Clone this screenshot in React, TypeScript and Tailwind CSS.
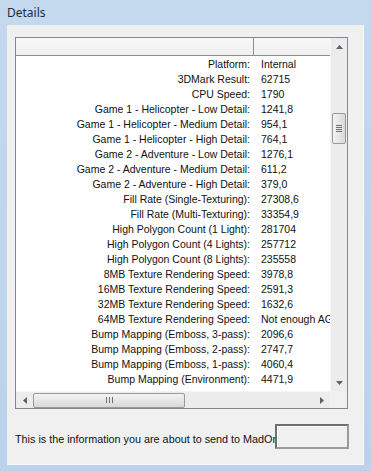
import React from 'react';

const rows: [string, string][] = [
  ['Platform:', 'Internal'],
  ['3DMark Result:', '62715'],
  ['CPU Speed:', '1790'],
  ['Game 1 - Helicopter - Low Detail:', '1241,8'],
  ['Game 1 - Helicopter - Medium Detail:', '954,1'],
  ['Game 1 - Helicopter - High Detail:', '764,1'],
  ['Game 2 - Adventure - Low Detail:', '1276,1'],
  ['Game 2 - Adventure - Medium Detail:', '611,2'],
  ['Game 2 - Adventure - High Detail:', '379,0'],
  ['Fill Rate (Single-Texturing):', '27308,6'],
  ['Fill Rate (Multi-Texturing):', '33354,9'],
  ['High Polygon Count (1 Light):', '281704'],
  ['High Polygon Count (4 Lights):', '257712'],
  ['High Polygon Count (8 Lights):', '235558'],
  ['8MB Texture Rendering Speed:', '3978,8'],
  ['16MB Texture Rendering Speed:', '2591,3'],
  ['32MB Texture Rendering Speed:', '1632,6'],
  ['64MB Texture Rendering Speed:', 'Not enough AGP memory'],
  ['Bump Mapping (Emboss, 3-pass):', '2096,6'],
  ['Bump Mapping (Emboss, 2-pass):', '2747,7'],
  ['Bump Mapping (Emboss, 1-pass):', '4060,4'],
  ['Bump Mapping (Environment):', '4471,9'],
];

function Arrow({ dir }: { dir: 'up' | 'down' | 'left' | 'right' }) {
  const pts = {
    up: '0,4 3.5,0 7,4',
    down: '0,0 3.5,4 7,0',
    left: '4,0 0,3.5 4,7',
    right: '0,0 4,3.5 0,7',
  }[dir];
  const vert = dir === 'up' || dir === 'down';
  return (
    <svg width={vert ? 7 : 4} height={vert ? 4 : 7} viewBox={vert ? '0 0 7 4' : '0 0 4 7'}>
      <polygon points={pts} fill="#606060" />
    </svg>
  );
}

export default function App() {
  return (
    <div
      className="w-[371px] h-[471px] bg-gradient-to-b from-[#c4d8ee] to-[#bcd2ec] flex flex-col overflow-hidden"
      style={{ fontFamily: '"Liberation Sans", Arial, sans-serif' }}
    >
      <div className="h-[25px] pl-[7px] pt-[4px] text-[12px] text-[#1b2b3f]" style={{ fontFamily: '"Noto Sans", sans-serif' }}>
        Details
      </div>
      <div className="ml-[7px] w-[357px] h-[440px] bg-[#f0f0f0] border-r border-b border-[#f8f8f8] relative pt-[12px] pl-[8px]">
        {/* list view */}
        <div className="w-[333px] h-[372px] border border-[#828790] bg-white flex">
          <div className="flex-1 flex flex-col min-w-0">
            <div className="h-[18px] flex bg-gradient-to-b from-[#f8f8f8] to-[#efefef] border-b border-[#8e8f8f]">
              <div className="w-[238px] border-r border-[#8e8f8f]" />
              <div className="flex-1" />
            </div>
            <div className="flex-1 overflow-hidden text-[10.5px] text-[#111] leading-[15px] pt-[1px]">
              {rows.map(([k, v]) => (
                <div key={k} className="flex h-[15px] whitespace-nowrap">
                  <div className="w-[234px] shrink-0 text-right">{k}</div>
                  <div className="pl-[11px]">{v}</div>
                </div>
              ))}
            </div>
            {/* horizontal scrollbar */}
            <div className="h-[17px] bg-[#ececec] flex items-center border-t border-[#f4f4f4]">
              <div className="w-[17px] flex items-center justify-center">
                <Arrow dir="left" />
              </div>
              <div className="flex-1 h-full flex items-center">
                <div className="w-[152px] h-[15px] rounded-[2px] border border-[#9a9a9a] bg-gradient-to-b from-[#f3f3f3] to-[#d9d9d9] flex items-center justify-center">
                  <div className="flex gap-[2px]">
                    <div className="w-[1px] h-[6px] bg-[#707070]" />
                    <div className="w-[1px] h-[6px] bg-[#707070]" />
                    <div className="w-[1px] h-[6px] bg-[#707070]" />
                  </div>
                </div>
              </div>
              <div className="w-[17px] flex items-center justify-center">
                <Arrow dir="right" />
              </div>
            </div>
          </div>
          {/* vertical scrollbar */}
          <div className="w-[17px] flex flex-col bg-[#ececec] border-l border-[#f4f4f4]">
            <div className="h-[17px] flex items-center justify-center">
              <Arrow dir="up" />
            </div>
            <div className="flex-1 pt-[58px]">
              <div className="mx-auto w-[14px] h-[31px] rounded-[2px] border border-[#9a9a9a] bg-gradient-to-r from-[#f3f3f3] to-[#d9d9d9] flex flex-col items-center justify-center gap-[1px]">
                <div className="w-[6px] h-[1px] bg-[#707070]" />
                <div className="w-[6px] h-[1px] bg-[#707070]" />
                <div className="w-[6px] h-[1px] bg-[#707070]" />
                <div className="w-[6px] h-[1px] bg-[#707070]" />
              </div>
            </div>
            <div className="h-[17px] flex items-center justify-center">
              <Arrow dir="down" />
            </div>
            <div className="h-[17px] bg-[#f0f0f0]" />
          </div>
        </div>
        {/* footer */}
        <div className="mt-[22px] text-[10.8px] text-[#111] whitespace-nowrap">
          This is the information you are about to send to MadOnion.com
        </div>
        <div className="absolute left-[268px] top-[399px] w-[74px] h-[25px] border-2 border-[#6f6f6f] border-r-[#9a9a9a] border-b-[#9a9a9a] bg-[#f0f0f0] shadow-[inset_1px_1px_0_#ffffff]" />
      </div>
    </div>
  );
}
